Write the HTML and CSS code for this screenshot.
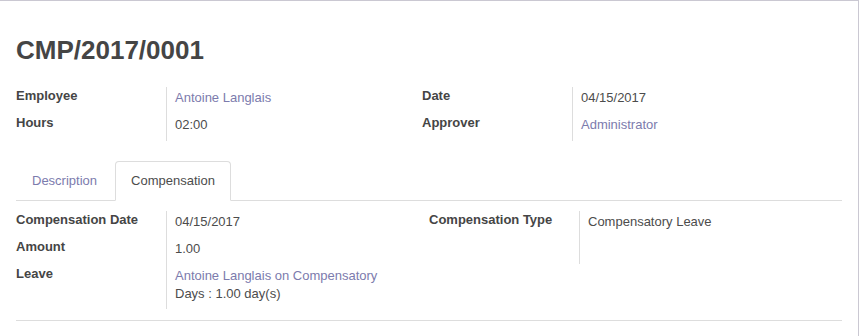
FILE: index.html
```html
<!DOCTYPE html>
<html lang="en">
<head>
  <meta charset="UTF-8">
  <meta name="viewport" content="width=device-width, initial-scale=1.0">
  <title>CMP/2017/0001</title>
  <link rel="stylesheet" href="styles.css">
</head>
<body>

  <div class="form-sheet">
    <h1 class="record-title">CMP/2017/0001</h1>

    <!-- Main fields -->
    <div class="outer-group outer-group-main">
      <div class="inner-group">
        <div class="field-row">
          <div class="field-label">Employee</div>
          <div class="field-value"><a href="#" class="field-link">Antoine Langlais</a></div>
        </div>
        <div class="field-row">
          <div class="field-label">Hours</div>
          <div class="field-value">02:00</div>
        </div>
      </div>
      <div class="inner-group">
        <div class="field-row">
          <div class="field-label">Date</div>
          <div class="field-value">04/15/2017</div>
        </div>
        <div class="field-row">
          <div class="field-label">Approver</div>
          <div class="field-value"><a href="#" class="field-link">Administrator</a></div>
        </div>
      </div>
    </div>

    <!-- Notebook -->
    <div class="notebook">
      <ul class="nav-tabs">
        <li><a href="#">Description</a></li>
        <li class="active"><a href="#">Compensation</a></li>
      </ul>

      <div class="tab-pane">
        <div class="outer-group outer-group-tab">
          <div class="inner-group">
            <div class="field-row">
              <div class="field-label">Compensation Date</div>
              <div class="field-value">04/15/2017</div>
            </div>
            <div class="field-row">
              <div class="field-label">Amount</div>
              <div class="field-value">1.00</div>
            </div>
            <div class="field-row field-row-last">
              <div class="field-label">Leave</div>
              <div class="field-value">
                <a href="#" class="field-link">Antoine Langlais on Compensatory</a><br>
                Days : 1.00 day(s)
              </div>
            </div>
          </div>
          <div class="inner-group">
            <div class="field-row field-row-tall">
              <div class="field-label">Compensation Type</div>
              <div class="field-value">Compensatory Leave</div>
            </div>
          </div>
        </div>
      </div>
    </div>
  </div>

</body>
</html>
```

FILE: styles.css
```css
body {
  margin: 0;
  font-family: "Liberation Sans", Arial, sans-serif;
  font-size: 13px;
  color: #4c4c4c;
  background-color: #fff;
}

.form-sheet {
  background-color: white;
  border-top: 1px solid #cac8d2;
  border-right: 1px solid #cac8d2;
  padding: 34px 16px 15px 16px;
  min-height: 285px;
}

.record-title {
  margin: 0;
  font-size: 26px;
  line-height: 30px;
  font-weight: bold;
  color: #454545;
}

/* Groups of fields */
.outer-group {
  display: grid;
}

.outer-group-main {
  grid-template-columns: 406px 1fr;
  margin-top: 22px;
}

.outer-group-tab {
  grid-template-columns: 413px 1fr;
}

.inner-group {
  display: flex;
  flex-direction: column;
  align-items: flex-start;
}

.field-row {
  display: grid;
  grid-template-columns: 151px 1fr;
  line-height: 18px;
}

.field-label {
  box-sizing: border-box;
  border-right: 1px solid #ddd;
  padding-bottom: 9px;
  font-weight: bold;
  color: #454545;
}

.field-value {
  padding: 2px 0 7px 8px;
}

.field-row-last .field-value {
  padding-bottom: 6px;
}

.field-row-tall {
  min-height: 53px;
}

.field-link {
  color: #7c7bad;
  text-decoration: none;
}

/* Notebook */
.notebook {
  margin-top: 20px;
}

.nav-tabs {
  display: flex;
  margin: 0;
  padding: 0;
  list-style: none;
  border-bottom: 1px solid #ddd;
}

.nav-tabs li {
  margin-right: 2px;
  margin-bottom: -1px;
}

.nav-tabs a {
  display: block;
  padding: 10px 15px;
  line-height: 18px;
  border: 1px solid transparent;
  border-radius: 4px 4px 0 0;
  color: #7c7bad;
  text-decoration: none;
}

.nav-tabs .active a {
  border-color: #ddd #ddd transparent;
  background-color: white;
  color: #4c4c4c;
}

.tab-pane {
  padding: 10px 0 11px 0;
  border-bottom: 1px solid #ddd;
}
```
